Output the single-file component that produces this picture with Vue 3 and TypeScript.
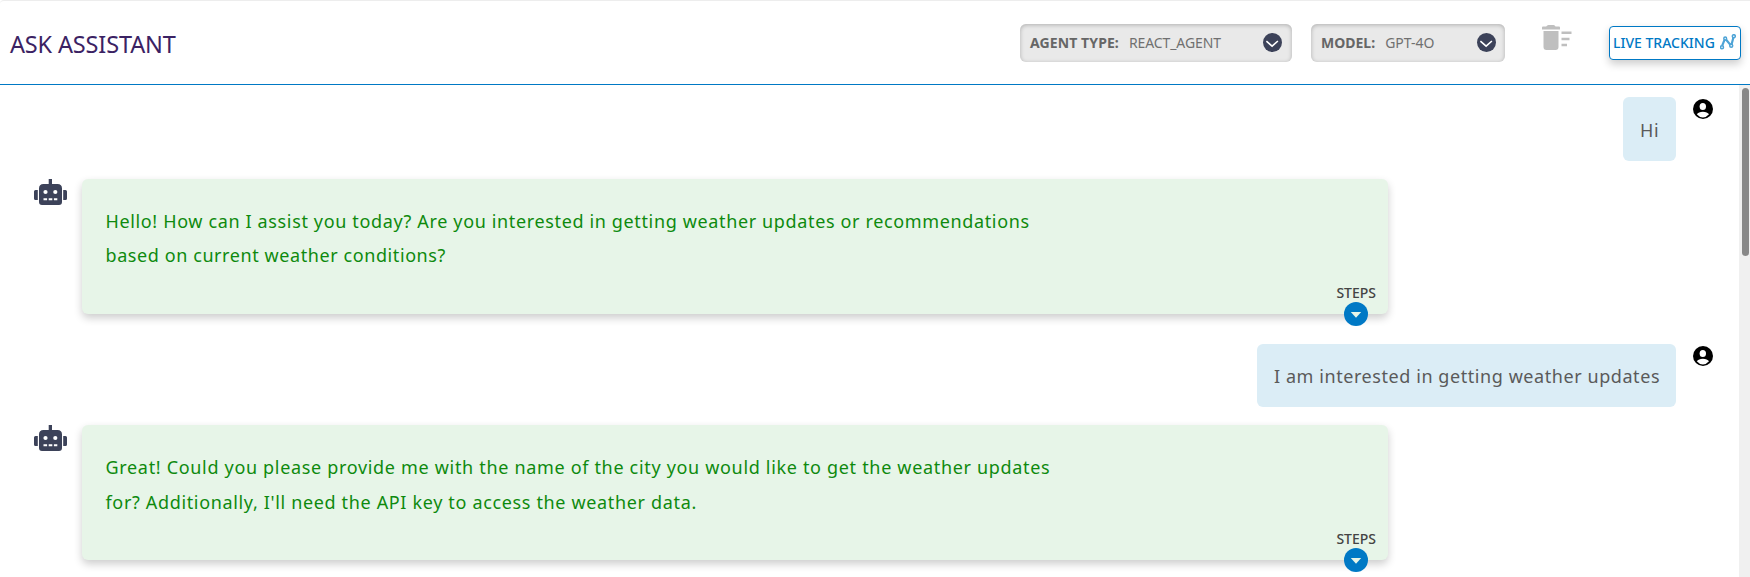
<script setup lang="ts">
interface Message {
  id: number
  role: 'user' | 'bot'
  lines: string[]
}

const selectors = [
  { label: 'AGENT TYPE:', value: 'REACT_AGENT', kind: 'agent' },
  { label: 'MODEL:', value: 'GPT-4O', kind: 'model' },
]

const messages: Message[] = [
  { id: 1, role: 'user', lines: ['Hi'] },
  {
    id: 2,
    role: 'bot',
    lines: [
      'Hello! How can I assist you today? Are you interested in getting weather updates or recommendations',
      'based on current weather conditions?',
    ],
  },
  { id: 3, role: 'user', lines: ['I am interested in getting weather updates'] },
  {
    id: 4,
    role: 'bot',
    lines: [
      'Great! Could you please provide me with the name of the city you would like to get the weather updates',
      "for? Additionally, I'll need the API key to access the weather data.",
    ],
  },
]
</script>

<template>
  <div class="page">
    <header class="header">
      <h1 class="title">ASK ASSISTANT</h1>
      <div v-for="s in selectors" :key="s.kind" class="select" :class="s.kind">
        <span class="select-label">{{ s.label }}</span>
        <span class="select-value">{{ s.value }}</span>
        <svg class="chevron" viewBox="0 0 19 19">
          <circle cx="9.5" cy="9.5" r="9.5" fill="#3c4259" />
          <path d="M3.4 8.2 9.1 13.2 14.9 8" fill="none" stroke="#fff" stroke-width="1.6" />
        </svg>
      </div>
      <svg class="trash" viewBox="0 0 30 26">
        <path
          fill="#bfbfbf"
          d="M0 2.5Q0 1.6 1 1.6H4.2Q5 0 6.5 0H11.500Q13 0 13.500 1.600H17Q18 1.600 18 2.500V4.600H0ZM1.500 6H16.500V22Q16.500 25 13.500 25H4.500Q1.500 25 1.500 22ZM19.500 6.500H29.500V9H19.500ZM19.500 12.700H27.500V15.200H19.500ZM19.500 18.700H25V21.200H19.500Z"
        />
      </svg>
      <button class="tracking" type="button">
        <span class="tracking-label">LIVE TRACKING</span>
        <svg class="graph" viewBox="0 0 16 16" fill="none" stroke="#4da3d6" stroke-width="1.500">
          <path d="M2.200 11.700 4.600 5.700M6.200 5.700 10.200 10.600M11.600 10.300 13.400 3.500" stroke-width="2.200" />
          <circle cx="2" cy="13.300" r="1.500" />
          <circle cx="5.200" cy="4.500" r="1.400" />
          <circle cx="11.200" cy="11.700" r="1.500" />
          <circle cx="13.800" cy="2.200" r="1.500" />
        </svg>
      </button>
    </header>

    <main class="body">
      <section class="chat">
        <div v-for="m in messages" :key="m.id" class="row" :class="[m.role, 'm' + m.id]">
          <template v-if="m.role === 'user'">
            <div class="bubble">{{ m.lines[0] }}</div>
            <svg class="avatar" viewBox="0 0 20 20">
              <circle cx="10" cy="10" r="10" />
              <ellipse cx="9.800" cy="7.600" rx="3.200" ry="3.500" fill="#fff" />
              <path d="M3.800 15.300Q5.500 12.700 9.900 12.700T16 15.300Q13.500 18.400 9.900 18.400T3.800 15.300Z" fill="#fff" />
            </svg>
          </template>
          <template v-else>
            <svg class="robot" viewBox="0 0 33 26">
              <path
                fill="#3c4259"
                d="M14.700 0H18V5H23.500Q28 5 28 9.500V23Q28 26 25 26H8Q5 26 5 23V9.500Q5 5 9.500 5H14.700ZM0 12.500Q0 11 1.500 11H3.800V21H1.500Q0 21 0 19.500ZM29.200 11H31.500Q33 11 33 12.500V19.500Q33 21 31.500 21H29.200Z"
              />
              <g fill="#fff">
                <circle cx="11.500" cy="13" r="2.100" />
                <circle cx="21.300" cy="13" r="2.100" />
                <path d="M9.500 19.300h3.600v2H9.500ZM14.700 19.300h3.600v2h-3.600ZM19.900 19.300h3.400v2h-3.400Z" />
              </g>
            </svg>
            <article class="card">
              <p class="answer">
                <span v-for="(line, i) in m.lines" :key="i" class="line" :class="'l' + i">{{ line }}</span>
              </p>
              <div class="steps">
                <span class="steps-label">STEPS</span>
                <svg class="steps-icon" viewBox="0 0 24 24">
                  <circle cx="12" cy="12" r="12" fill="#0079c5" />
                  <path d="M6.800 10H17.200L12 15.700Z" fill="#e7f5e8" />
                </svg>
              </div>
            </article>
          </template>
        </div>
      </section>
      <div class="scrollbar"><div class="thumb"></div></div>
    </main>
  </div>
</template>

<style>
body {
  margin: 0;
  background: #fff;
}
</style>

<style scoped>
.page {
  box-sizing: border-box;
  width: 1750px;
  height: 577px;
  overflow: hidden;
  display: flex;
  flex-direction: column;
  border-top: 1px solid #ededed;
  border-top-left-radius: 4px;
  background: #fff;
  font-family: 'Noto Sans', 'Open Sans', sans-serif;
}
.header {
  box-sizing: border-box;
  flex: none;
  height: 84px;
  display: flex;
  align-items: flex-start;
  border-bottom: 1px solid #0079c5;
  padding: 23px 9px 0 10px;
}
.title {
  margin: 4px auto 0 0;
  font-size: 23.500px;
  line-height: 32px;
  font-weight: 400;
  letter-spacing: -0.150px;
  color: #3b2263;
  white-space: nowrap;
}
.select {
  box-sizing: border-box;
  height: 38px;
  display: flex;
  align-items: center;
  padding: 0 10px 2px;
  border-radius: 6px;
  background: #e9e9e9;
  box-shadow: inset 0 1px 4px rgba(0, 0, 0, 0.250);
  font-size: 14px;
  color: #666;
  white-space: nowrap;
}
.agent {
  width: 272px;
  margin-right: 19px;
}
.model {
  width: 194px;
  margin-right: 37px;
}
.select-label {
  font-weight: 700;
  margin-right: 10px;
}
.select-value {
  color: #707070;
}
.agent .select-label {
  letter-spacing: 0.100px;
}
.agent .select-value {
  letter-spacing: -0.100px;
}
.chevron {
  width: 19px;
  height: 19px;
  margin-left: auto;
}
.model .chevron {
  margin-right: -1px;
}
.trash {
  width: 30px;
  height: 26px;
  margin: 1px 37px 0 0;
}
.tracking {
  box-sizing: border-box;
  width: 132px;
  height: 34px;
  margin-top: 2px;
  padding: 0 4px 1px 3px;
  display: flex;
  align-items: center;
  justify-content: space-between;
  border: 1px solid #0079c5;
  border-radius: 4px;
  background: #fff;
  box-shadow: 0 4px 8px rgba(0, 0, 0, 0.200);
  font-family: inherit;
  font-size: 14px;
  font-weight: 500;
  color: #0079c5;
  white-space: nowrap;
}
.graph {
  width: 16px;
  height: 16px;
  margin-bottom: 2px;
}
.body {
  flex: 1;
  display: flex;
  min-height: 0;
}
.chat {
  flex: 1;
  padding: 12px 26px 0 34px;
}
.row {
  display: flex;
  align-items: flex-start;
}
.user {
  justify-content: flex-end;
}
.bubble {
  box-sizing: border-box;
  height: 63px;
  padding: 0 17px;
  border-radius: 6px;
  background: #dbedf6;
  color: #5a5a5a;
  font-size: 18px;
  line-height: 64px;
  letter-spacing: 0.570px;
  white-space: nowrap;
}
.m1 .bubble {
  width: 53px;
  height: 64px;
  line-height: 66px;
}
.m3 .bubble {
  width: 419px;
}
.avatar {
  width: 20px;
  height: 20px;
  margin: 2px 0 0 17px;
}
.bot {
  margin: 18px 0 30px;
}
.robot {
  width: 33px;
  height: 26px;
  flex: none;
}
.card {
  box-sizing: border-box;
  width: 1306.500px;
  height: 135px;
  margin-left: 14.500px;
  padding: 25px 12px 0 24px;
  display: flex;
  flex-direction: column;
  border-radius: 6px;
  background: #e7f5e8;
  box-shadow: 0 4px 8px rgba(0, 0, 0, 0.200);
}
.answer {
  margin: 0;
  color: #0e8a0e;
  font-size: 18px;
  line-height: 34px;
  white-space: nowrap;
}
.line {
  display: block;
}
.m2 .l0 {
  letter-spacing: 0.640px;
}
.m2 .l1 {
  letter-spacing: 0.585px;
}
.m4 .l0 {
  letter-spacing: 0.677px;
}
.m4 .l1 {
  letter-spacing: 0.655px;
  line-height: 36px;
  margin-bottom: -2px;
}
.steps {
  align-self: flex-end;
  display: flex;
  flex-direction: column;
  align-items: center;
  margin-top: 11px;
  font-size: 14px;
  font-weight: 500;
  line-height: 19px;
  color: #444;
}
.steps-icon {
  width: 24px;
  height: 24px;
}
.scrollbar {
  box-sizing: border-box;
  width: 11px;
  padding: 3px 1px 0 3px;
  background: #f0f0f0;
}
.thumb {
  height: 168px;
  border-radius: 4px;
  background: #888;
}
</style>
